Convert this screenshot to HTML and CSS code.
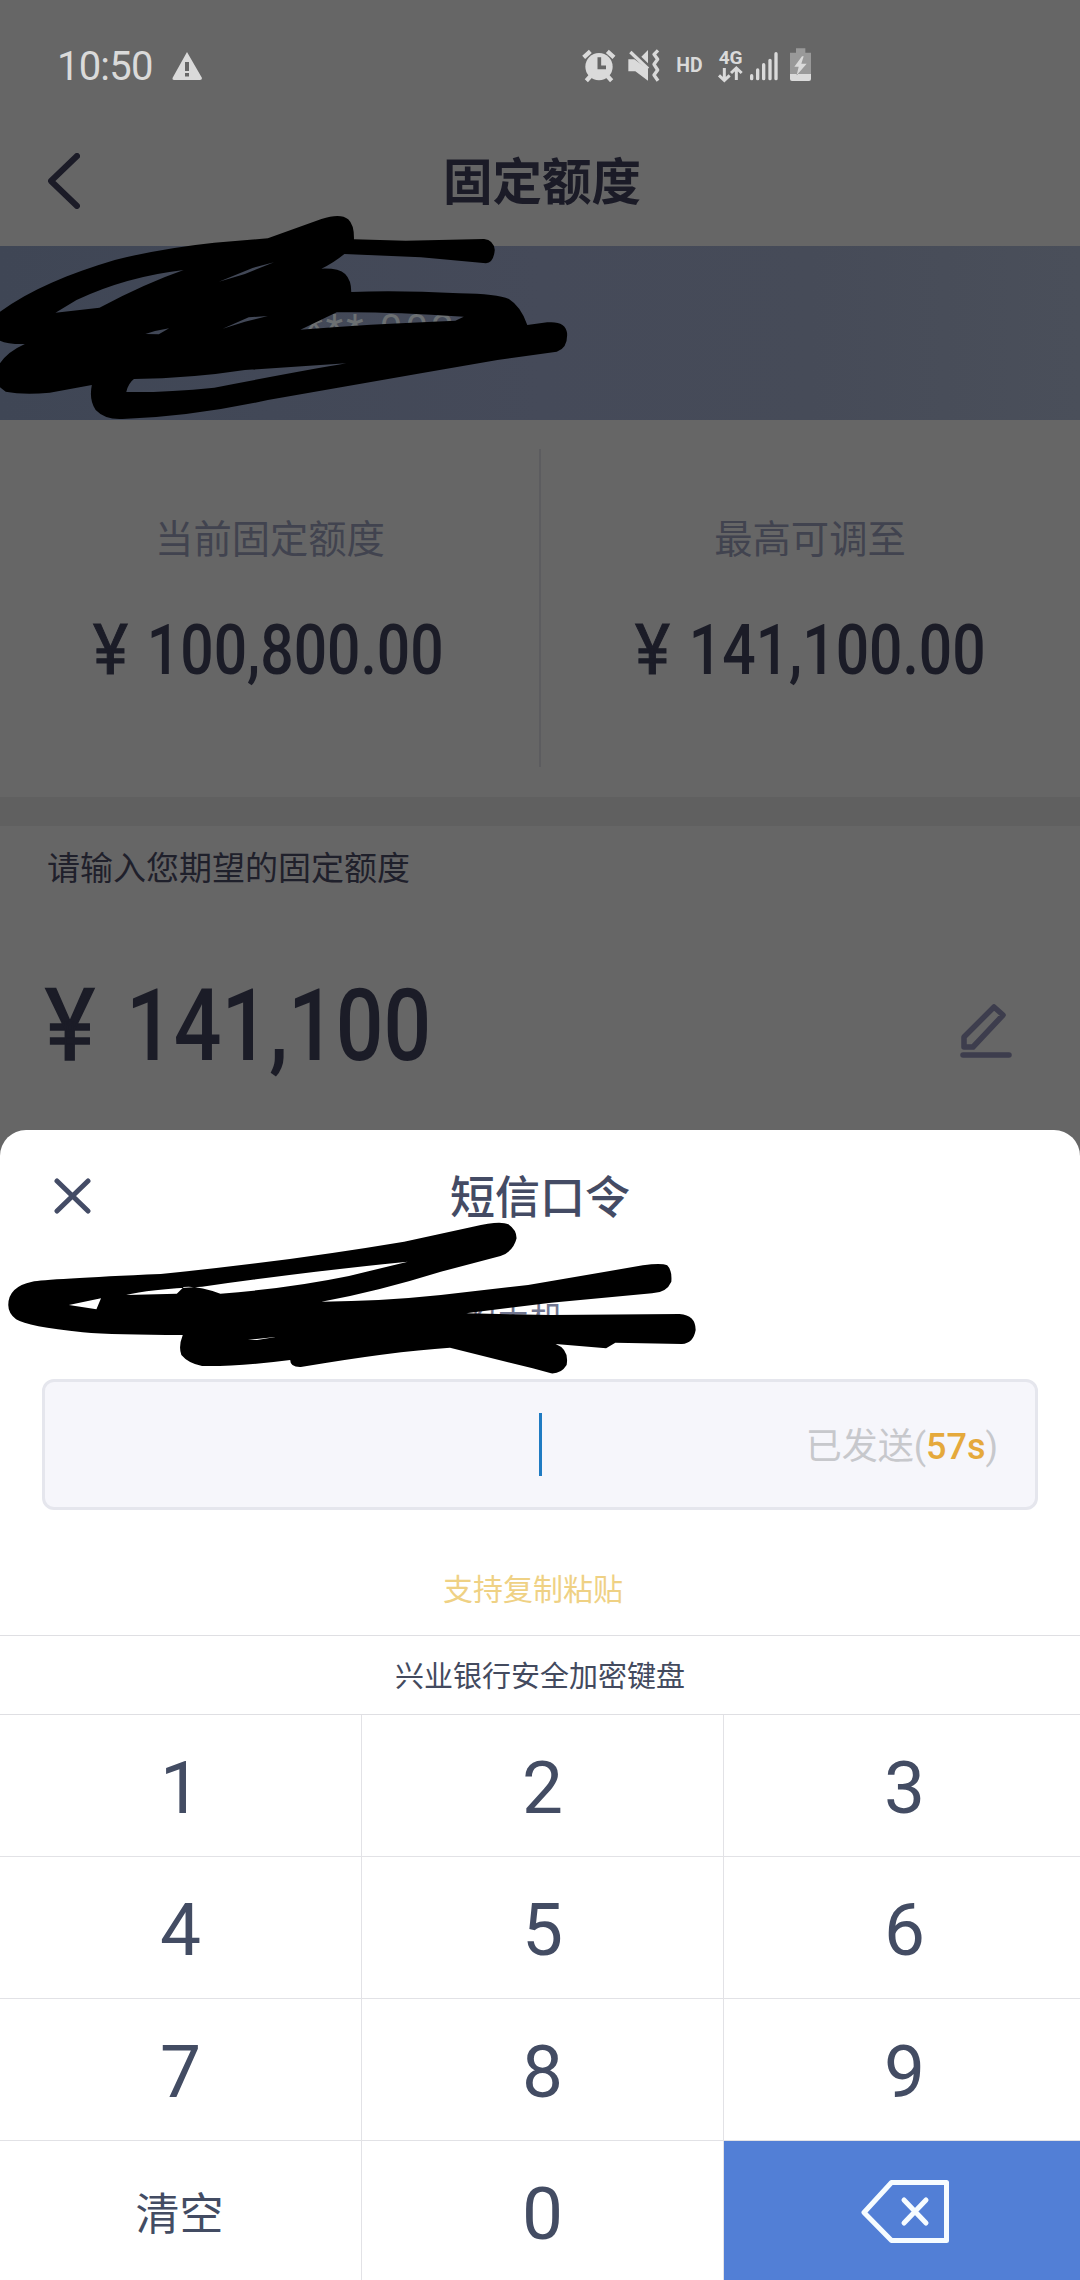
FILE: index.html
```html
<!DOCTYPE html>
<html lang="zh-CN">
<head>
<meta charset="utf-8">
<title>固定额度</title>
<link rel="stylesheet" href="styles.css">
</head>
<body>
<main class="screen">
  <div class="statusbar">
    <span class="clock">10:50</span>
    <svg class="warning" viewBox="0 0 30 28"><path fill="#dadada" fill-rule="evenodd" d="M15 0 30 26Q30 28 28 28H2Q0 28 .5 26ZM13 10V19H17V10ZM13 21V24.500H17V21Z"/></svg>
    <svg class="system-icons" viewBox="0 0 960 240">
      <g fill="none" stroke="#dadada">
        <circle cx="177" cy="110" r="41" fill="#dadada" stroke="none"/>
        <path stroke-width="13" d="M131 82 151 64M222 82 202 64M152 138 139 152M202 138 215 152"/>
        <path stroke="#666" stroke-width="11" d="M178 82V112H198"/>
        <path fill="#dadada" stroke="none" d="M265 88H283L324 118V152L286 124H265ZM304 80 324 60V100Z"/>
        <path stroke-width="10" d="M271 66 324 116"/>
        <path stroke-width="10" stroke-linejoin="round" d="M354 61 342 73 353 88 342 103 353 120 342 135 354 152"/>
        <path stroke-width="9" d="M553 114V148M537 136 553 151 569 136M589 150V116M573 129 589 114 605 129"/>
        <path stroke-width="10" stroke-linecap="round" d="M635 137V146M653 120V146M671 104V146M690 91V146M708 71V146"/>
      </g>
      <path fill="#999" d="M768 55H796V68H813V132H750V68H768Z"/>
      <path fill="#dadada" d="M750 132H813V147Q813 153 807 153H756Q750 153 750 147ZM786 79 763 110H776L770 136 800 101H784L791 79Z"/>
      <text class="hd" x="409" y="126" textLength="79" lengthAdjust="spacingAndGlyphs">HD</text>
      <text class="net" x="536" y="101" textLength="72" lengthAdjust="spacingAndGlyphs">4G</text>
    </svg>
  </div>

  <header class="navbar">
    <svg class="back" viewBox="0 0 32 56"><path d="M29 3 3 28 29 53" fill="none" stroke="#1b1b27" stroke-width="6" stroke-linecap="round" stroke-linejoin="round"/></svg>
    <h1>固定额度</h1>
  </header>

  <section class="banner"><span>**** 002</span></section>

  <section class="limits">
    <div class="limit"><p class="label">当前固定额度</p><p class="amount"><span class="yen">¥</span>100,800.00</p></div>
    <div class="limit"><p class="label">最高可调至</p><p class="amount"><span class="yen">¥</span>141,100.00</p></div>
  </section>

  <section class="expect">
    <p class="prompt">请输入您期望的固定额度</p>
    <div class="expect-row">
      <p class="wanted"><span class="yen">¥</span>141,100</p>
      <svg class="edit" viewBox="0 0 52 56"><g fill="none" stroke="#3d3d4d" stroke-width="5.500" stroke-linejoin="round"><path d="M4 44V34L34 4 43 12 13 44Z"/><path stroke-linecap="round" d="M3 52H49"/></g></svg>
    </div>
  </section>

  <section class="sheet">
    <header class="sheet-head">
      <svg class="close" viewBox="0 0 38 36"><path d="M3 3 34 33M34 3 3 33" fill="none" stroke="#444c66" stroke-width="5" stroke-linecap="round"/></svg>
      <h2>短信口令</h2>
    </header>
    <p class="hint">的手机</p>
    <div class="code-field">
      <i class="caret"></i>
      <span class="sent">已发送(<b>57s</b>)</span>
    </div>
    <p class="paste">支持复制粘贴</p>
    <p class="brand">兴业银行安全加密键盘</p>
    <div class="keys">
      <span>1</span><span>2</span><span>3</span>
      <span>4</span><span>5</span><span>6</span>
      <span>7</span><span>8</span><span>9</span>
      <span class="clear">清空</span><span>0</span>
      <span class="delete"><svg viewBox="0 0 88 63"><g fill="none" stroke="#f6fcff" stroke-linejoin="round" stroke-linecap="round"><path stroke-width="5" d="M30.500 2.500H85.500V60.500H30.500L3 32.500Z"/><path stroke-width="5" d="M43 20 65 43M65 20 43 43"/></g></svg></span>
    </div>
  </section>

  <svg class="scribble scribble-top" viewBox="0 0 1568 720" preserveAspectRatio="none"><path fill-rule="evenodd" d="M0 335C80 270 180 220 300 180Q420 145 560 128L700 115L840 57Q890 38 910 58Q926 75 925 118L1060 122L1265 117Q1290 120 1293 150Q1290 188 1270 190L1100 172L900 162Q870 190 840 206Q885 204 902 222Q918 240 918 276Q1040 270 1200 280Q1300 282 1330 297Q1362 320 1378 375L1430 367Q1478 362 1482 400Q1484 445 1455 455L1300 480L1100 520L700 600Q500 650 320 657Q275 660 250 630Q232 600 240 555L130 578Q60 585 15 575L0 562V490Q20 455 65 432Q20 433 0 422Z
    M145 338 260 323Q380 250 480 210Q330 230 200 300Z
    M785 389Q950 373 1190 362L1212 350Q1000 334 880 337Z
    M330 576Q335 550 350 537Q500 535 640 510L905 490Q800 510 560 563Q430 578 330 576Z
    M572 245 640 222 716 187 660 204Z M582 386 640 365 700 348 650 352Z M380 402 415 403 442 385 405 393Z"/></svg>
  <svg class="scribble scribble-sheet" viewBox="0 0 1568 810" preserveAspectRatio="none"><path fill-rule="evenodd" d="M18 555Q18 500 70 485Q100 477 350 462Q620 425 880 365L1030 320Q1090 300 1107 313Q1125 330 1125 355Q1118 395 1090 408L960 455Q820 515 700 545Q830 544 960 525L1150 495L1400 436Q1440 428 1453 436Q1464 450 1462 485Q1452 518 1420 520L1200 548L1015 580L1200 585L1480 582Q1515 585 1515 630Q1510 670 1485 672L1340 668L1320 685L1210 672Q1240 688 1234 735Q1222 762 1200 760L1160 745L980 683Q850 695 655 741Q632 742 632 720Q520 740 440 738Q410 730 395 705Q388 680 398 645Q250 645 180 637Q60 620 35 598Q18 580 18 555Z
    M275 525 385 521 400 501Q430 496 480 521Q630 505 760 468L888 425Q700 450 440 500Q320 508 275 525Z
    M150 555 220 535 210 568Z M540 660 600 651 560 660Z"/></svg>
</main>
</body>
</html>
```
FILE: styles.css
```css
* { box-sizing: border-box; margin: 0; padding: 0; }
body { width: 1080px; height: 2280px; overflow: hidden; background: #666; font-family: Roboto, "Noto Sans CJK SC", sans-serif; }
.screen { position: relative; display: flex; flex-direction: column; width: 1080px; height: 2280px; overflow: hidden; }

.statusbar { display: flex; flex: none; height: 115px; padding-left: 57px; }
.clock { width: 115px; padding-top: 43px; font-size: 40px; line-height: 47px; color: #dadada; letter-spacing: -.8px; }
.warning { width: 30px; height: 28px; margin-top: 52px; }
.system-icons { width: 320px; height: 80px; margin: 30px 0 0 338px; }
.system-icons text { fill: #dadada; font-weight: 700; }
.hd { font-size: 58px; }
.net { font-size: 54px; }

.navbar { display: grid; grid-template-columns: 80px 1fr 80px; align-items: center; flex: none; height: 131px; color: #1b1b27; }
.back { width: 32px; height: 56px; margin-left: 48px; }
h1 { padding: 4px 0 0 4px; font-size: 49.5px; line-height: 60px; text-align: center; font-weight: 700; }

.banner { flex: none; height: 174px; padding: 60px 0 0 285px; background: linear-gradient(90deg, #3f4655, #454a59 50%, #464b58 75%, #4a4f5a); font-size: 40px; line-height: 47px; letter-spacing: 3.2px; color: #6c7072; }

.limits { display: flex; flex: none; height: 377px; }
.limit { position: relative; flex: 1; padding-top: 92px; }
.limit + .limit::before { content: ""; position: absolute; left: -1px; top: 29px; width: 2px; height: 318px; background: #5c5c5f; }
.label { height: 56px; font-size: 38.3px; line-height: 56px; text-align: center; color: #41434f; }
.amount { margin: 41px 0 0 93px; width: 430px; font-size: 70px; line-height: 82px; font-weight: 500; color: #1b1c27; transform: scaleX(.84); transform-origin: 0 50%; white-space: pre; }
.limit + .limit .amount { margin-left: 95px; }
.yen { display: inline-block; margin-right: .39em; font-weight: 400; -webkit-text-stroke: .015em; transform: scaleX(1.13); transform-origin: 0 50%; }

.expect { flex: none; height: 333px; padding-left: 47px; border-top: 29px solid #606060; }
.prompt { padding-top: 18px; font-size: 33px; line-height: 50px; color: #1f202b; }
.expect-row { display: flex; align-items: flex-start; justify-content: space-between; padding-right: 68px; }
.wanted { width: 460px; margin: 73px 0 0 -2px; font-size: 100px; line-height: 117px; font-weight: 500; color: #1b1c27; white-space: pre; transform: scaleX(.84); transform-origin: 0 50%; }
.wanted .yen { margin-right: .44em; }
.edit { width: 52px; height: 56px; margin-top: 109px; }

.sheet { display: flex; flex-direction: column; flex: none; height: 1150px; background: #fff; border-radius: 26px 26px 0 0; }
.sheet-head { display: grid; grid-template-columns: 92px 1fr 92px; align-items: center; height: 134px; color: #444b64; }
.close { width: 38px; height: 36px; margin: -2px 0 0 54px; }
h2 { padding-top: 5px; font-size: 45px; line-height: 60px; font-weight: 500; text-align: center; }
.hint { height: 115px; padding: 30px 0 0 462px; font-size: 34px; line-height: 50px; color: #70758f; }
.code-field { display: grid; grid-template-columns: 1fr 3px 1fr; align-items: center; flex: none; height: 131px; margin: 0 42px; border: 3px solid #e5e6ed; border-radius: 12px; background: #f6f6fb; }
.caret { grid-column: 2; width: 3px; height: 63px; background: #1f7bc2; }
.sent { padding: 6px 37px 0 0; text-align: right; font-size: 36px; line-height: 50px; color: #c7c8cc; }
.sent b { font-weight: 500; color: #e5a93c; }
.paste { height: 126px; padding: 60px 14px 0 0; border-bottom: 1px solid #dfdfe3; font-size: 30px; line-height: 40px; text-align: center; color: #efd184; }
.brand { height: 79px; padding-top: 1px; border-bottom: 1px solid #dfdfe3; font-size: 29px; line-height: 80px; text-align: center; color: #434a5e; }
.keys { display: grid; grid-template-columns: repeat(3, 362px); grid-auto-rows: 142px; width: 1080px; height: 566px; overflow: hidden; }
.keys span { display: flex; align-items: center; justify-content: center; padding-top: 5px; border-right: 1px solid #e2e2e6; border-bottom: 1px solid #e2e2e6; font-size: 73px; color: #434c63; }
.keys .clear { padding: 0 2px 0 0; font-size: 44px; }
.keys .delete { padding: 0; background: #527fd6; border: 0; }
.delete svg { width: 88px; height: 63px; }

.scribble { position: absolute; left: 0; }
.scribble-top { top: 200px; width: 600px; height: 240px; }
.scribble-sheet { top: 1120px; width: 720px; height: 270px; }
```
